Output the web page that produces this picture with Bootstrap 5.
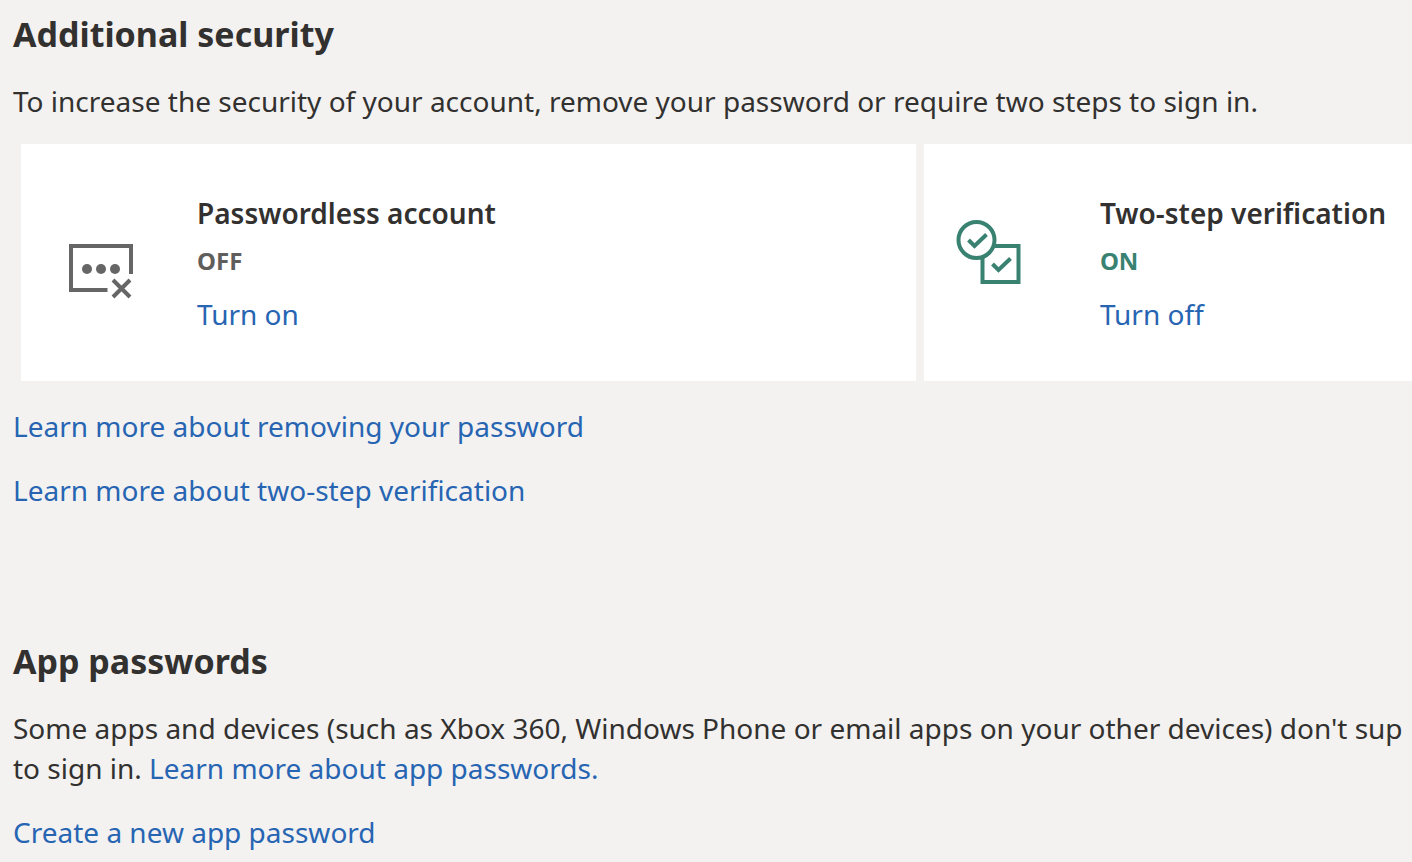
<!DOCTYPE html>
<html lang="en">
<head>
<meta charset="utf-8">
<meta name="viewport" content="width=device-width, initial-scale=1">
<title>Additional security</title>
<link href="https://cdn.jsdelivr.net/npm/bootstrap@5.3.0/dist/css/bootstrap.min.css" rel="stylesheet">
<style>
  body {
    background: #f3f2f1;
    color: #323130;
    font-family: "Noto Sans", "Open Sans", sans-serif;
    font-size: 28px;
    line-height: 40px;
  }
  a { color: #2765b3; }
  .page { padding: 10px 0 10px 13px; }
  .section-title { font-size: 34px; line-height: 48px; font-weight: 700; margin-bottom: 23px; }
  .intro { margin-bottom: 23px; }
  .option-grid { display: grid; grid-template-columns: 11fr 6fr; gap: 8px; margin-bottom: 25px; }
  .option { padding: 49px 0 47px 24px; gap: 40px; min-width: 0; }
  .option-icon { width: 112px; height: 96px; margin-top: 20px; }
  .option-name { font-size: 28px; line-height: 40px; font-weight: 600; margin-bottom: 12px; }
  .option-state { font-size: 24px; line-height: 32px; font-weight: 700; margin-bottom: 17px; }
  .state-off { color: #5f5e5d; }
  .icon-off { color: #666666; }
  .state-on, .icon-on { color: #398271; }
  .next-section { margin-top: 127px; }
</style>
</head>
<body class="overflow-hidden">
<main class="page">
  <section>
    <h2 class="section-title">Additional security</h2>
    <p class="intro">To increase the security of your account, remove your password or require two steps to sign in.</p>
    <div class="option-grid ps-2">
      <div class="option bg-white d-flex align-items-start">
        <svg class="option-icon icon-off flex-shrink-0" viewBox="0 0 112 96" fill="none" stroke="currentColor" stroke-width="4" aria-hidden="true">
          <path d="M62.500 77H26V33H86V61"/>
          <g fill="currentColor" stroke="none"><circle cx="42" cy="56" r="5"/><circle cx="56" cy="56" r="5"/><circle cx="70" cy="56" r="5"/></g>
          <path d="M68 67L85 84M85 67L68 84"/>
        </svg>
        <div>
          <h3 class="option-name">Passwordless account</h3>
          <div class="option-state state-off">OFF</div>
          <a class="text-decoration-none" href="#">Turn on</a>
        </div>
      </div>
      <div class="option bg-white d-flex align-items-start">
        <svg class="option-icon icon-on flex-shrink-0" viewBox="0 0 112 96" fill="none" stroke="currentColor" stroke-width="4" aria-hidden="true">
          <circle cx="28.500" cy="27" r="18"/>
          <path d="M46 33H70.500V69H34.500V44"/>
          <path d="M20.500 27L26.500 33L38.500 21.500M44.500 51L50.500 57L62.500 45.500"/>
        </svg>
        <div>
          <h3 class="option-name text-nowrap">Two-step verification</h3>
          <div class="option-state state-on">ON</div>
          <a class="text-decoration-none" href="#">Turn off</a>
        </div>
      </div>
    </div>
    <p class="mb-4"><a class="text-decoration-none" href="#">Learn more about removing your password</a></p>
    <p class="mb-0"><a class="text-decoration-none" href="#">Learn more about two-step verification</a></p>
  </section>
  <section class="next-section">
    <h2 class="section-title">App passwords</h2>
    <p class="mb-4 text-nowrap">Some apps and devices (such as Xbox 360, Windows Phone or email apps on your other devices) don't sup<br>to sign in. <a class="text-decoration-none" href="#">Learn more about app passwords.</a></p>
    <p class="mb-0"><a class="text-decoration-none" href="#">Create a new app password</a></p>
  </section>
</main>
<script src="https://cdn.jsdelivr.net/npm/bootstrap@5.3.0/dist/js/bootstrap.bundle.min.js"></script>
</body>
</html>
